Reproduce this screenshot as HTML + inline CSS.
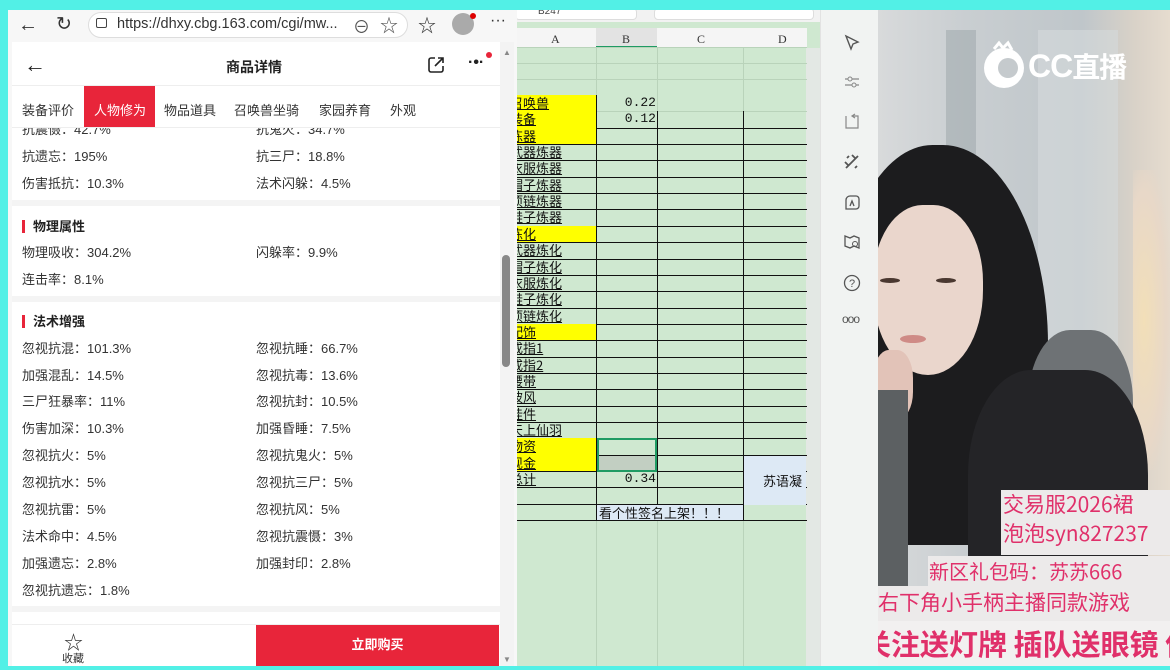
<!DOCTYPE html>
<html><head><meta charset="utf-8"><style>
*{margin:0;padding:0;box-sizing:border-box}
body{width:1170px;height:670px;overflow:hidden;position:relative;background:#52f0e6;font-family:"Liberation Sans","Noto Sans CJK SC",sans-serif}
.abs{position:absolute}
#br{left:8px;top:10px;width:510px;height:656px;background:#f7f7f7}
#page{left:12px;top:42px;width:488px;height:624px;background:#fff;overflow:hidden}
.row{position:absolute;font-size:13px;color:#333;white-space:nowrap}
.sec{position:absolute;left:10px;font-size:13px;font-weight:bold;color:#222;padding-left:8px;border-left:3px solid #e8253a;line-height:13px}
.div{position:absolute;left:0;width:488px;height:6px;background:#f4f4f4}
#ss{left:517px;top:10px;width:303px;height:656px;background:#cfe8d0;overflow:hidden}
.r{position:absolute;left:0;width:290px;height:1px;background:#b9d3ba}
.a{position:absolute;left:-7px;width:86px;font-size:13px;color:#111;text-decoration:underline;white-space:nowrap;font-family:"Noto Sans CJK SC",sans-serif;line-height:16px}
.y{background:#ffff00}
#tb{left:820px;top:10px;width:58px;height:656px;background:#f1f3f2;border-left:1px solid #e2e2e2}
.ic{position:absolute;left:22px;width:18px;height:18px}
#cam{left:878px;top:10px;width:292px;height:656px;background:linear-gradient(90deg,#d8dadb 0%,#c9ced1 30%,#bfc6ca 70%,#d9d2c8 88%,#e6dccf 100%);overflow:hidden}
.pk{position:absolute;background:#eceaea;color:#e0306a;white-space:nowrap;font-family:"Noto Sans CJK SC",sans-serif}
</style></head><body>
<div class="abs" style="left:0;top:0;width:1170px;height:10px;background:#52f0e6"></div>
<div id="br" class="abs">
 <div class="abs" style="left:10px;top:4px;font-size:20px;color:#333">←</div>
 <div class="abs" style="left:48px;top:3px;font-size:19px;color:#333">↻</div>
 <div class="abs" style="left:80px;top:2px;width:320px;height:26px;border-radius:13px;background:#fff;border:1px solid #ddd"></div>
 <div class="abs" style="left:88px;top:8px;width:11px;height:10px;border:1.5px solid #444;border-radius:2px"></div>
 <div class="abs" style="left:109px;top:6px;font-size:14.5px;color:#333">https://dhxy.cbg.163.com/cgi/mw...</div>
 <div class="abs" style="left:345px;top:3px;font-size:17px;color:#555">⊖</div>
 <div class="abs" style="left:372px;top:2px;font-size:18px;color:#555">☆</div>
 <div class="abs" style="left:410px;top:2px;font-size:18px;color:#333">☆</div>
 <div class="abs" style="left:444px;top:3px;width:22px;height:22px;border-radius:50%;background:#aaa"></div>
 <div class="abs" style="left:462px;top:3px;width:6px;height:6px;border-radius:50%;background:#d00"></div>
 <div class="abs" style="left:482px;top:2px;font-size:16px;color:#333">···</div>
</div>
<div id="page" class="abs">
 <div class="abs" style="left:12px;top:10px;font-size:22px;color:#222">←</div>
 <div class="abs" style="left:214px;top:15px;font-size:14px;font-weight:bold;color:#222">商品详情</div>
 <svg class="abs" style="left:415px;top:14px" width="18" height="18" viewBox="0 0 18 18"><path d="M8 2H4a2 2 0 0 0-2 2v10a2 2 0 0 0 2 2h10a2 2 0 0 0 2-2v-4M11 2h5v5M16 2L8 10" fill="none" stroke="#222" stroke-width="1.6"/></svg>
 <div class="abs" style="left:456px;top:12px;font-size:16px;font-weight:bold;color:#222">·•·</div>
 <div class="abs" style="left:474px;top:10px;width:6px;height:6px;border-radius:50%;background:#e8253a"></div>
 <div class="abs" style="left:0;top:43px;width:488px;height:1px;background:#eee"></div>
 <div class="abs" style="left:72px;top:44px;width:71px;height:41px;background:#e8253a"></div>
 <div class="row" style="left:10px;top:58px">装备评价</div>
 <div class="row" style="left:82px;top:58px;color:#fff">人物修为</div>
 <div class="row" style="left:152px;top:58px">物品道具</div>
 <div class="row" style="left:222px;top:58px">召唤兽坐骑</div>
 <div class="row" style="left:307px;top:58px">家园养育</div>
 <div class="row" style="left:378px;top:58px">外观</div>
 <div class="abs" style="left:0;top:85px;width:488px;height:1px;background:#eee"></div>
 <div class="row" style="left:10px;top:77px;clip-path:inset(9px 0 0 0)">抗震慑：42.7%</div>
 <div class="row" style="left:244px;top:77px;clip-path:inset(9px 0 0 0)">抗鬼火：34.7%</div>
 <div class="row" style="left:10px;top:104px">抗遗忘：195%</div><div class="row" style="left:244px;top:104px">抗三尸：18.8%</div>
 <div class="row" style="left:10px;top:131px">伤害抵抗：10.3%</div><div class="row" style="left:244px;top:131px">法术闪躲：4.5%</div>
 <div class="div" style="top:158px"></div>
 <div class="sec" style="top:178px">物理属性</div>
 <div class="row" style="left:10px;top:200px">物理吸收：304.2%</div><div class="row" style="left:244px;top:200px">闪躲率：9.9%</div>
 <div class="row" style="left:10px;top:227px">连击率：8.1%</div>
 <div class="div" style="top:254px"></div>
 <div class="sec" style="top:273px">法术增强</div>
 <div class="row" style="left:10px;top:296px">忽视抗混：101.3%</div><div class="row" style="left:244px;top:296px">忽视抗睡：66.7%</div>
 <div class="row" style="left:10px;top:323px">加强混乱：14.5%</div><div class="row" style="left:244px;top:323px">忽视抗毒：13.6%</div>
 <div class="row" style="left:10px;top:349px">三尸狂暴率：11%</div><div class="row" style="left:244px;top:349px">忽视抗封：10.5%</div>
 <div class="row" style="left:10px;top:376px">伤害加深：10.3%</div><div class="row" style="left:244px;top:376px">加强昏睡：7.5%</div>
 <div class="row" style="left:10px;top:403px">忽视抗火：5%</div><div class="row" style="left:244px;top:403px">忽视抗鬼火：5%</div>
 <div class="row" style="left:10px;top:430px">忽视抗水：5%</div><div class="row" style="left:244px;top:430px">忽视抗三尸：5%</div>
 <div class="row" style="left:10px;top:457px">忽视抗雷：5%</div><div class="row" style="left:244px;top:457px">忽视抗风：5%</div>
 <div class="row" style="left:10px;top:484px">法术命中：4.5%</div><div class="row" style="left:244px;top:484px">忽视抗震慑：3%</div>
 <div class="row" style="left:10px;top:511px">加强遗忘：2.8%</div><div class="row" style="left:244px;top:511px">加强封印：2.8%</div>
 <div class="row" style="left:10px;top:538px">忽视抗遗忘：1.8%</div>
 <div class="div" style="top:564px"></div>
 <div class="abs" style="left:0;top:582px;width:488px;height:1px;background:#eee"></div>
 <div class="abs" style="left:52px;top:586px;font-size:19px;color:#333">☆</div>
 <div class="abs" style="left:50px;top:608px;font-size:11px;color:#333">收藏</div>
 <div class="abs" style="left:244px;top:583px;width:243px;height:41px;background:#e8253a;color:#fff;font-size:13px;font-weight:bold;text-align:center;line-height:40px">立即购买</div>
</div>
<div class="abs" style="left:500px;top:42px;width:14px;height:624px;background:#f3f3f3"></div>
<div class="abs" style="left:502px;top:255px;width:8px;height:112px;border-radius:4px;background:#888"></div>
<div class="abs" style="left:503px;top:48px;font-size:8px;color:#888">▲</div>
<div class="abs" style="left:503px;top:655px;font-size:8px;color:#888">▼</div>

<div id="ss" class="abs">
 <div class="abs" style="left:0;top:0;width:303px;height:12px;background:#f2f2f2"></div>
 <div class="abs" style="left:-2px;top:-2px;width:122px;height:12px;background:#fff;border:1px solid #ddd;border-radius:4px;font-size:10px;color:#444;padding-left:22px;line-height:6px">B247</div>
 <div class="abs" style="left:137px;top:-2px;width:160px;height:12px;background:#fff;border:1px solid #ddd;border-radius:4px"></div>
 <div class="abs" style="left:0;top:18px;width:290px;height:20px;background:#f5f5f5"></div>
 <div class="abs" style="left:79px;top:18px;width:61px;height:20px;background:#e3e3e3;border-bottom:2px solid #1f9b63"></div>
 <div class="abs" style="left:34px;top:22px;font-size:12px;color:#333;font-family:'Liberation Serif',serif">A</div>
 <div class="abs" style="left:105px;top:22px;font-size:12px;color:#333;font-family:'Liberation Serif',serif">B</div>
 <div class="abs" style="left:180px;top:22px;font-size:12px;color:#333;font-family:'Liberation Serif',serif">C</div>
 <div class="abs" style="left:261px;top:22px;font-size:12px;color:#333;font-family:'Liberation Serif',serif">D</div>
 <div class="abs" style="left:79px;top:38px;width:1px;height:620px;background:#b9d3ba"></div>
 <div class="abs" style="left:140px;top:38px;width:1px;height:620px;background:#b9d3ba"></div>
 <div class="abs" style="left:226px;top:38px;width:1px;height:620px;background:#b9d3ba"></div>
 <div class="abs" style="left:289px;top:38px;width:14px;height:620px;background:#e3e8e4"></div>
 <div id="rows"></div>
</div>
<script>
var A=[["召唤兽",1,"0.22"],["装备",1,"0.12"],["炼器",1],["武器炼器"],["衣服炼器"],["帽子炼器"],["项链炼器"],["鞋子炼器"],["炼化",1],["武器炼化"],["帽子炼化"],["衣服炼化"],["鞋子炼化"],["项链炼化"],["配饰",1],["戒指1"],["戒指2"],["腰带"],["披风"],["挂件"],["天上仙羽"],["物资",1],["现金",1],["总计",0,"0.34"],[""],[""]];
var h="",t0=85,rh=16.35;
for(var i=0;i<3;i++){h+='<div class="r" style="top:'+(37+i*16)+'px"></div>';}
for(var i=0;i<A.length;i++){var y=t0+i*rh;
 h+='<div class="a'+(A[i][1]?' y':'')+'" style="top:'+y+'px;height:'+rh+'px">'+A[i][0]+'</div>';
 if(A[i][2])h+='<div class="abs" style="left:80px;width:59px;text-align:right;top:'+(y)+'px;font-family:\'Liberation Mono\',monospace;font-size:13px;color:#111">'+A[i][2]+'</div>';
 h+='<div class="abs" style="left:0;top:'+(y+rh)+'px;width:290px;height:1px;background:'+(i<1?'#b9d3ba':'#111')+'"></div>';}
h+='<div class="abs" style="left:79px;top:85px;width:1px;height:'+(rh*26)+'px;background:#111"></div>';
h+='<div class="abs" style="left:140px;top:'+(t0+rh)+'px;width:1px;height:'+(rh*25)+'px;background:#111"></div>';
h+='<div class="abs" style="left:226px;top:'+(t0+rh)+'px;width:1px;height:'+(rh*25)+'px;background:#111"></div>';
h+='<div class="abs" style="left:80px;top:'+(t0+21*rh)+'px;width:60px;height:'+(2*rh+1)+'px;border:2px solid #1f9b63"></div>';
h+='<div class="abs" style="left:82px;top:'+(t0+22*rh+1)+'px;width:56px;height:'+(rh-2)+'px;background:#c2cfc2"></div>';
h+='<div class="abs" style="left:227px;top:'+(t0+22*rh+1)+'px;width:62px;height:'+(3*rh)+'px;background:#dde9f5"></div>';
h+='<div class="abs" style="left:246px;top:'+(t0+23*rh)+'px;font-size:13px;color:#111;font-family:\'Noto Sans CJK SC\',sans-serif">苏语凝</div>';
h+='<div class="abs" style="left:80px;top:'+(t0+25*rh+1)+'px;width:146px;height:'+(rh-1)+'px;background:#dde9f5"></div>';
h+='<div class="abs" style="left:82px;top:'+(t0+25*rh-1)+'px;font-size:13px;color:#111;font-family:\'Noto Sans CJK SC\',sans-serif">看个性签名上架！！！</div>';
document.getElementById('rows').innerHTML=h;
</script>

<div id="tb" class="abs">
 <div class="abs" style="left:22px;top:-2px;width:14px;height:2px;background:#666"></div>
 <svg class="ic" style="top:24px" viewBox="0 0 18 18"><path d="M3 2l12 6-5 2-2 5z" fill="none" stroke="#555" stroke-width="1.4"/></svg>
 <svg class="ic" style="top:63px" viewBox="0 0 18 18"><path d="M2 6h14M2 12h14" stroke="#888" stroke-width="1.2"/><circle cx="7" cy="6" r="2" fill="#f1f3f2" stroke="#888"/><circle cx="11" cy="12" r="2" fill="#f1f3f2" stroke="#888"/></svg>
 <svg class="ic" style="top:103px" viewBox="0 0 18 18"><path d="M3 3v12h12V3H9M12 1l-3 2 3 2" fill="none" stroke="#888" stroke-width="1.2"/></svg>
 <svg class="ic" style="top:143px" viewBox="0 0 18 18"><path d="M3 15L15 3M4 5l2-2M12 15l2-2M2 9l3 3M9 2l3 3" stroke="#555" stroke-width="1.8"/></svg>
 <svg class="ic" style="top:184px" viewBox="0 0 18 18"><path d="M3 15V6a4 4 0 0 1 4-4h6a3 3 0 0 1 3 3v7a3 3 0 0 1-3 3z M7 12l2-5 2 5" fill="none" stroke="#555" stroke-width="1.3"/></svg>
 <svg class="ic" style="top:223px" viewBox="0 0 18 18"><path d="M2 3l5 2 4-2 5 2v10l-5-2-4 2-5-2z" fill="none" stroke="#555" stroke-width="1.3"/><circle cx="12" cy="11" r="2.5" fill="none" stroke="#555"/></svg>
 <svg class="ic" style="top:264px" viewBox="0 0 18 18"><circle cx="9" cy="9" r="7.5" fill="none" stroke="#555" stroke-width="1.3"/><text x="9" y="13" font-size="11" text-anchor="middle" fill="#555" font-family="Liberation Sans">?</text></svg>
 <div class="abs" style="left:21px;top:302px;font-size:12px;color:#555;letter-spacing:-1px">ooo</div>
</div>

<div id="cam" class="abs">
 <div class="abs" style="left:68px;top:20px;width:30px;height:400px;background:#9aa3a8;opacity:.5"></div>
 <div class="abs" style="left:160px;top:20px;width:80px;height:330px;background:#d6dadc;opacity:.6"></div>
 <div class="abs" style="left:255px;top:160px;width:37px;height:300px;background:radial-gradient(ellipse at 30% 50%,#f2dfb8,#e8d8c8 60%,transparent 80%)"></div>
 <div class="abs" style="left:-40px;top:135px;width:210px;height:400px;border-radius:45% 50% 0 0;background:#1c1c1e"></div>
 <div class="abs" style="left:150px;top:320px;width:105px;height:180px;border-radius:40% 40% 10% 10%;background:#6e7275"></div>
 <div class="abs" style="left:90px;top:360px;width:180px;height:300px;border-radius:35% 35% 0 0;background:#242427"></div>
 <div class="abs" style="left:-5px;top:195px;width:110px;height:170px;border-radius:45% 45% 50% 50%;background:#ead6cc"></div>
 <div class="abs" style="left:2px;top:268px;width:20px;height:5px;border-radius:50%;background:#4a3830"></div>
 <div class="abs" style="left:58px;top:268px;width:20px;height:5px;border-radius:50%;background:#4a3830"></div>
 <div class="abs" style="left:22px;top:325px;width:26px;height:8px;border-radius:50%;background:#cf8b86"></div>
 <div class="abs" style="left:-5px;top:340px;width:40px;height:70px;border-radius:40%;background:#e2c3b8"></div>
 <div class="abs" style="left:0;top:380px;width:30px;height:200px;background:#5c6062"></div>
 <div class="abs" style="left:102px;top:30px;width:140px;height:55px">
  <svg width="48" height="50" viewBox="0 0 48 50"><circle cx="24" cy="28" r="20" fill="#fff"/><circle cx="28" cy="28" r="10" fill="#c5cacd"/><path d="M14 9l5-6 4 5 5-5 4 7" fill="none" stroke="#fff" stroke-width="3"/></svg>
  <div class="abs" style="left:48px;top:6px;font-size:32px;font-weight:bold;color:#fff;white-space:nowrap;letter-spacing:-1px">CC<span style="font-family:'Noto Sans CJK SC',sans-serif;font-size:28px">直播</span></div>
 </div>
 <div class="pk" style="left:123px;top:480px;width:169px;height:65px;font-size:21px;line-height:29px;padding-left:2px">交易服2026裙<br>泡泡syn827237</div>
 <div class="pk" style="left:50px;top:546px;width:242px;height:30px;font-size:20px;line-height:30px;padding-left:1px">新区礼包码：苏苏666</div>
 <div class="pk" style="left:0;top:576px;width:292px;height:35px;font-size:21px;line-height:32px">右下角小手柄主播同款游戏</div>
 <div class="pk" style="left:-16px;top:611px;width:310px;height:45px;font-size:29px;line-height:44px;font-weight:bold;background:#f2f0f0">关注送灯牌 插队送眼镜 估37</div>
</div>
<div class="abs" style="left:0;top:666px;width:1170px;height:4px;background:#52f0e6"></div>
<div class="abs" style="left:0;top:0;width:1170px;height:10px;background:#52f0e6"></div>
</body></html>
